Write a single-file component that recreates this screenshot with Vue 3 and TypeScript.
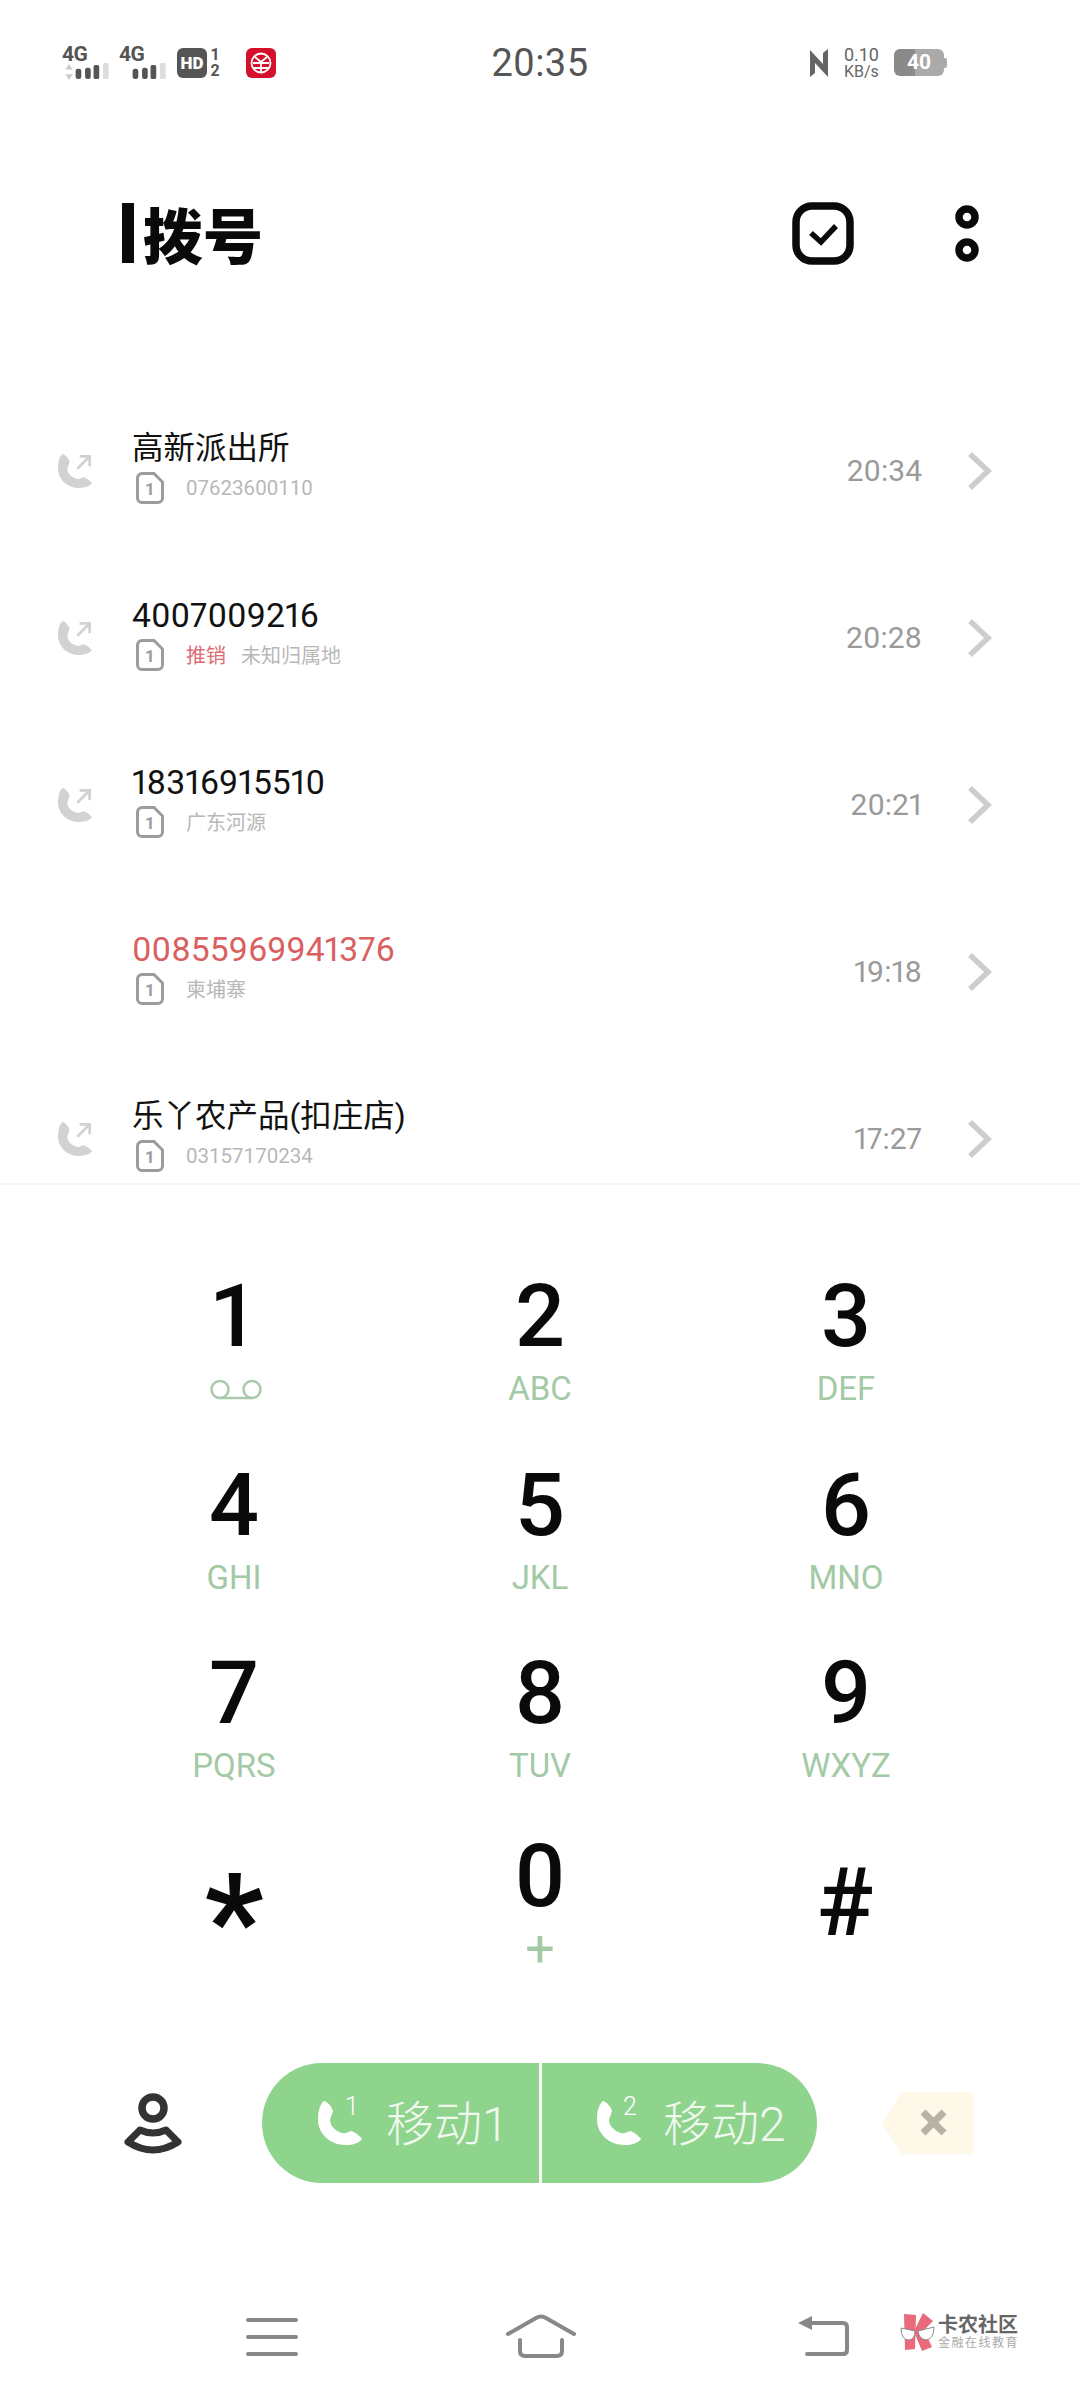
<template>
  <div class="phone">
    <!-- status bar -->
    <div class="status">
      <div class="status-left">
        <div class="net">
          <span class="net-label">4G</span>
          <svg class="net-bars" width="48" height="18" viewBox="0 0 48 18">
            <path d="M6 1l4 6H2zM6 18l4-6H2z" fill="#ccc" />
            <rect x="13" y="6" width="6" height="11" rx="2.5" fill="#555" />
            <rect x="23" y="5" width="6" height="12" rx="2.5" fill="#555" />
            <rect x="32" y="2" width="6" height="15" rx="2" fill="#555" />
            <rect x="42" y="0" width="6" height="17" rx="1.5" fill="#ddd" />
          </svg>
        </div>
        <div class="net net-second">
          <span class="net-label">4G</span>
          <svg class="net-bars" width="48" height="18" viewBox="0 0 48 18">
            <rect x="13" y="6" width="6" height="11" rx="2.5" fill="#555" />
            <rect x="23" y="5" width="6" height="12" rx="2.5" fill="#555" />
            <rect x="32" y="2" width="6" height="15" rx="2" fill="#555" />
            <rect x="42" y="0" width="6" height="17" rx="1.5" fill="#ddd" />
          </svg>
        </div>
        <span class="hd">HD</span>
        <span class="hd-slots"><b>1</b><b>2</b></span>
        <svg class="bank" width="30" height="30" viewBox="0 0 30 30">
          <rect width="30" height="30" rx="6" fill="#d5102c" />
          <circle cx="15" cy="15" r="9.5" fill="none" stroke="#fff" stroke-width="1.8" />
          <path d="M9 9l6 5 6-5M7 15h16M8 20h14M15 14v10" fill="none" stroke="#fff" stroke-width="1.8" />
        </svg>
      </div>
      <div class="clock">20:35</div>
      <div class="status-right">
        <svg width="20" height="30" viewBox="0 0 20 30">
          <path d="M1 2l13 14V5l5-4v28L6 15v10l-5 4z" fill="#666" />
        </svg>
        <div class="speed"><span>0.10</span><span class="speed-unit">KB/s</span></div>
        <div class="battery">
          <div class="battery-body"><span>40</span></div>
          <i class="battery-tip"></i>
        </div>
      </div>
    </div>

    <!-- page title and actions -->
    <div class="header">
      <i class="caret"></i>
      <h1 class="title">拨号</h1>
      <svg class="select-icon" width="62" height="63" viewBox="0 0 62 63">
        <rect x="4" y="4" width="54" height="55" rx="16" fill="none" stroke="#0a0a0a" stroke-width="7.5" />
        <path d="M19 31l10 9 15-16" fill="none" stroke="#0a0a0a" stroke-width="5.5" />
      </svg>
      <svg class="more-icon" width="24" height="57" viewBox="0 0 24 57">
        <circle cx="12" cy="12" r="8" fill="none" stroke="#0a0a0a" stroke-width="7.5" />
        <circle cx="12" cy="45" r="8" fill="none" stroke="#0a0a0a" stroke-width="7.5" />
      </svg>
    </div>

    <!-- recent calls -->
    <div class="calls">
      <div v-for="call in calls" :key="call.name" class="call">
        <div class="call-type">
          <svg v-if="call.outgoing" width="34" height="34" viewBox="0 0 44 44">
            <path :d="handset" fill="#d2d2d2" />
            <path d="M25 19L41 3M28 3h13v13" fill="none" stroke="#d2d2d2" stroke-width="3.5" />
          </svg>
        </div>
        <div class="call-info">
          <div class="call-name" :class="{ missed: call.missed, plain: !isNumber(call.name) }">{{ call.name }}</div>
          <div class="call-sub">
            <svg class="sim" width="28" height="32" viewBox="0 0 28 32">
              <path d="M6 1.500h12l8.500 8.500v16a4.500 4.500 0 0 1-4.500 4.500H6A4.500 4.500 0 0 1 1.500 26V6A4.500 4.500 0 0 1 6 1.500z" fill="none" stroke="#9c9c9c" stroke-width="3" />
              <text x="14" y="23" text-anchor="middle">1</text>
            </svg>
            <span v-if="call.tag" class="call-tag">{{ call.tag }}</span>
            <span class="call-detail" :class="{ number: isNumber(call.detail) }">{{ call.detail }}</span>
          </div>
        </div>
        <div class="call-time">{{ call.time }}</div>
        <svg class="chevron" width="26" height="40" viewBox="0 0 26 40">
          <path d="M4 3l18 17L4 37" fill="none" stroke="#cdcdcd" stroke-width="5.5" />
        </svg>
      </div>
    </div>

    <!-- dial pad -->
    <div class="dialer">
      <div class="keys">
        <div v-for="key in keys" :key="key.digit" class="key" :class="key.kind">
          <span class="digit">{{ key.digit }}</span>
          <svg v-if="key.digit === '1'" class="voicemail" width="52" height="22" viewBox="0 0 52 22">
            <circle cx="10" cy="10.500" r="8.500" fill="none" stroke="#a9c9ad" stroke-width="2.500" />
            <circle cx="42" cy="10.500" r="8.500" fill="none" stroke="#a9c9ad" stroke-width="2.500" />
            <path d="M10 19h32" stroke="#a9c9ad" stroke-width="2.500" />
          </svg>
          <span v-else-if="key.letters" class="letters">{{ key.letters }}</span>
        </div>
      </div>

      <div class="actions">
        <svg class="contacts" width="60" height="61" viewBox="0 0 60 61">
          <circle cx="30" cy="15" r="11" fill="none" stroke="#333" stroke-width="7.500" />
          <path d="M5 49l12-12q13 6 26 0l12 12Q30 65 5 49z" fill="none" stroke="#333" stroke-width="7" stroke-linejoin="round" />
        </svg>
        <div class="call-btn">
          <div class="sim-call first">
            <svg width="44" height="44" viewBox="0 0 44 44"><path :d="handset" fill="#fff" /></svg>
            <sup>1</sup>
            <span>移动1</span>
          </div>
          <div class="sim-call second">
            <svg width="44" height="44" viewBox="0 0 44 44"><path :d="handset" fill="#fff" /></svg>
            <sup>2</sup>
            <span>移动2</span>
          </div>
        </div>
        <svg class="backspace" width="92" height="62" viewBox="0 0 92 62">
          <path d="M20 0h66a6 6 0 0 1 6 6v50a6 6 0 0 1-6 6H20L0 31z" fill="#fdf8e7" />
          <path d="M41 20l21 21M62 20L41 41" stroke="#b6b2a4" stroke-width="7" />
        </svg>
      </div>
    </div>

    <!-- navigation bar -->
    <div class="nav">
      <svg width="52" height="44" viewBox="0 0 52 44">
        <path d="M2 6h48M2 23h48M2 40h48" stroke="#888" stroke-width="4" stroke-linecap="round" />
      </svg>
      <svg class="nav-home" width="70" height="44" viewBox="0 0 70 44">
        <path d="M2 20L30 4q5-3 10 0l28 16M14 26v11q0 5 5 5h32q5 0 5-5V26" fill="none" stroke="#888" stroke-width="4" stroke-linecap="round" stroke-linejoin="round" />
      </svg>
      <svg class="nav-back" width="52" height="44" viewBox="0 0 52 44">
        <path d="M1 9L15 2v14z" fill="#888" />
        <path d="M13 9h33q4 0 4 4v23q0 4-4 4H10" fill="none" stroke="#888" stroke-width="4" stroke-linecap="round" stroke-linejoin="round" />
      </svg>
    </div>

    <!-- forum mark in the corner -->
    <div class="mark">
      <svg width="36" height="38" viewBox="0 0 36 38">
        <path d="M4 1l12 1-1 34-10 1zM16 14l7-14 10 8-9 9 8 17-10 4-7-17z" fill="#ea6a7c" />
        <path d="M1 15l14 3q0 8-6 9-8 0-8-12zM18 18l16-4q0 12-8 13-7-1-8-9z" fill="#fff" stroke="#8a8a8a" stroke-width="1" />
      </svg>
      <div class="mark-text">
        <div class="mark-name">卡农社区</div>
        <div class="mark-sub">金融在线教育</div>
      </div>
    </div>
  </div>
</template>

<script setup lang="ts">
interface Call {
  name: string
  detail: string
  time: string
  tag?: string
  outgoing?: boolean
  missed?: boolean
}

interface Key {
  digit: string
  letters?: string
  kind?: string
}

const handset =
  'M6 0C2 3 0 10 0 18c0 15 12 26 28 26 7 0 13-2 16-6-2-3-7-7-11-8-3 1-6 3-9 2-6-2-11-6-12-12 0-3 2-6 3-10-1-4-5-9-9-10z'

const calls: Call[] = [
  { name: '高新派出所', detail: '07623600110', time: '20:34', outgoing: true },
  { name: '4007009216', tag: '推销', detail: '未知归属地', time: '20:28', outgoing: true },
  { name: '18316915510', detail: '广东河源', time: '20:21', outgoing: true },
  { name: '00855969941376', detail: '柬埔寨', time: '19:18', missed: true },
  { name: '乐丫农产品(扣庄店)', detail: '03157170234', time: '17:27', outgoing: true }
]

const keys: Key[] = [
  { digit: '1' },
  { digit: '2', letters: 'ABC' },
  { digit: '3', letters: 'DEF' },
  { digit: '4', letters: 'GHI' },
  { digit: '5', letters: 'JKL' },
  { digit: '6', letters: 'MNO' },
  { digit: '7', letters: 'PQRS' },
  { digit: '8', letters: 'TUV' },
  { digit: '9', letters: 'WXYZ' },
  { digit: '*', kind: 'star' },
  { digit: '0', letters: '+', kind: 'zero' },
  { digit: '#', kind: 'hash' }
]

const isNumber = (text: string) => /^\d+$/.test(text)
</script>

<style>
html,
body {
  margin: 0;
  background: #fff;
}
</style>

<style scoped>
.phone {
  position: relative;
  width: 1080px;
  height: 2400px;
  overflow: hidden;
  background: #fff;
  display: flex;
  flex-direction: column;
  font-family: Roboto, "Noto Sans CJK SC", sans-serif;
  color: #0a0a0a;
}

.status {
  height: 122px;
  box-sizing: border-box;
  padding-top: 3px;
  flex: none;
  display: grid;
  grid-template-columns: 1fr auto 1fr;
  align-items: center;
}

.status-left {
  display: flex;
  align-items: center;
  padding-left: 62px;
}

.net {
  width: 48px;
  height: 34px;
  display: flex;
  flex-direction: column;
  font-size: 21px;
  font-weight: 700;
  color: #555;
  line-height: 16px;
  letter-spacing: -0.5px;
}

.net-second {
  margin-left: 9px;
}

.net-bars {
  display: block;
  margin-top: 1px;
}

.hd {
  margin-left: 10px;
  width: 30px;
  height: 30px;
  border-radius: 6px;
  background: #555;
  color: #fff;
  font-size: 17px;
  font-weight: 900;
  line-height: 30px;
  text-align: center;
}

.hd-slots {
  margin-left: 2px;
  width: 12px;
  display: flex;
  flex-direction: column;
  align-items: center;
  color: #555;
  font-size: 16px;
  line-height: 16px;
}

.bank {
  margin-left: 25px;
}

.clock {
  font-size: 38px;
  color: #555;
  letter-spacing: 0.5px;
}

.status-right {
  display: flex;
  align-items: center;
  justify-content: flex-end;
  padding-right: 133px;
  color: #666;
}

.speed {
  margin-left: 15px;
  display: flex;
  flex-direction: column;
  align-items: center;
  font-size: 18px;
  line-height: 18px;
}

.speed-unit {
  font-size: 16px;
  line-height: 16px;
}

.battery {
  margin-left: 15px;
  display: flex;
  align-items: center;
}

.battery-body {
  width: 50px;
  height: 27px;
  border-radius: 6px;
  background: linear-gradient(to right, #8a8a8a 21px, #aaa 21px);
  color: #fff;
  font-size: 21px;
  font-weight: 700;
  line-height: 27px;
  text-align: center;
}

.battery-tip {
  width: 3px;
  height: 10px;
  background: #aaa;
  border-radius: 0 2px 2px 0;
}

.header {
  flex: none;
  height: 64px;
  margin-top: 79px;
  padding: 0 101px 0 122px;
  display: flex;
  align-items: center;
}

.caret {
  width: 12px;
  height: 60px;
  background: #0a0a0a;
}

.title {
  margin: 0 0 0 9px;
  font-size: 60px;
  font-weight: 900;
  line-height: 64px;
  font-family: "Noto Sans CJK SC", sans-serif;
}

.select-icon {
  margin-left: auto;
}

.more-icon {
  margin-left: 101px;
}

.calls {
  flex: none;
  height: 796px;
  margin-top: 122px;
  overflow: hidden;
}

.call {
  height: 167px;
  padding: 0 88px 0 58px;
  display: flex;
  align-items: center;
}

.call-type {
  width: 74px;
  height: 34px;
  flex: none;
}

.call-info {
  flex: 1;
  min-width: 0;
}

.call-name {
  font-size: 33.700px;
  line-height: 44px;
  margin-top: -11px;
  font-variant-numeric: proportional-nums;
  color: #111;
}

.call-name.plain {
  font-size: 31.500px;
}

.call-name.missed {
  color: #d9605f;
}

.call-sub {
  display: flex;
  align-items: center;
  height: 32px;
  padding-left: 4px;
  margin-top: 1px;
  font-size: 20px;
  color: #b8b8b8;
}

.call-detail.number {
  font-size: 20.500px;
}

.sim text {
  font-size: 17px;
  font-weight: 700;
  fill: #9c9c9c;
}

.call-sub .sim {
  margin-right: 22px;
}

.call-tag {
  color: #dd6a74;
  margin-right: 15px;
}

.call-time {
  font-size: 30px;
  color: #9a9a9a;
  font-variant-numeric: proportional-nums;
}

.chevron {
  margin-left: 44px;
}

.dialer {
  flex: none;
  height: 1000px;
  box-sizing: border-box;
  border-top: 2px solid #f6f6f6;
  padding-top: 78px;
  display: flex;
  flex-direction: column;
}

.keys {
  width: 918px;
  margin: 0 auto;
  display: grid;
  grid-template-columns: repeat(3, 306px);
  grid-auto-rows: 188.500px;
}

.key {
  display: flex;
  flex-direction: column;
  align-items: center;
}

.digit {
  font-size: 88px;
  font-weight: 500;
  line-height: 96px;
  margin-top: 5px;
}

.letters {
  font-size: 33px;
  line-height: 50px;
  color: #a3c9a5;
}

.voicemail {
  margin-top: 15px;
  margin-left: 3px;
}

.zero {
  margin-top: -6px;
}

.zero .letters {
  font-size: 52px;
}

.star .digit {
  font-size: 130px;
  font-weight: 700;
  line-height: 176px;
  margin-top: 4px;
}

.hash .digit {
  font-size: 94px;
  font-weight: 500;
  line-height: 148px;
  margin-top: 0;
  margin-right: 2px;
}

.actions {
  position: absolute;
  left: 0;
  right: 0;
  top: 2063px;
  height: 120px;
  display: flex;
  align-items: center;
  padding-left: 123px;
}

.contacts {
  flex: none;
}

.call-btn {
  margin-left: 79px;
  width: 555px;
  height: 120px;
  flex: none;
  border-radius: 60px;
  overflow: hidden;
  display: flex;
  background: #8fd48d;
}

.sim-call {
  position: relative;
  display: flex;
  align-items: center;
  color: #f1f8ef;
  font-size: 48px;
  font-weight: 300;
}

.sim-call.first {
  width: 280px;
  padding-left: 56px;
  box-sizing: border-box;
  border-right: 3px solid #fff;
}

.sim-call.second {
  padding-left: 55px;
}

.sim-call sup {
  position: absolute;
  font-size: 25px;
  line-height: 26px;
  top: 31px;
  color: #fff;
}

.sim-call.first sup {
  left: 83px;
}

.sim-call.second sup {
  left: 81px;
}

.sim-call span {
  margin-left: 24px;
  margin-bottom: 7px;
}

.sim-call.second span {
  margin-left: 22px;
}

.backspace {
  margin-left: 65px;
  flex: none;
}

.nav {
  position: absolute;
  left: 246px;
  top: 2314px;
  display: flex;
  align-items: flex-start;
}

.nav-home {
  margin-left: 208px;
}

.nav-back {
  margin-left: 221px;
}

.mark {
  position: absolute;
  left: 900px;
  top: 2313px;
  display: flex;
  align-items: center;
  gap: 2px;
}

.mark-name {
  font-size: 20px;
  line-height: 22px;
  font-weight: 700;
  color: #666;
}

.mark-sub {
  font-size: 12px;
  line-height: 14px;
  letter-spacing: 1.500px;
  color: #aaa;
}
</style>
